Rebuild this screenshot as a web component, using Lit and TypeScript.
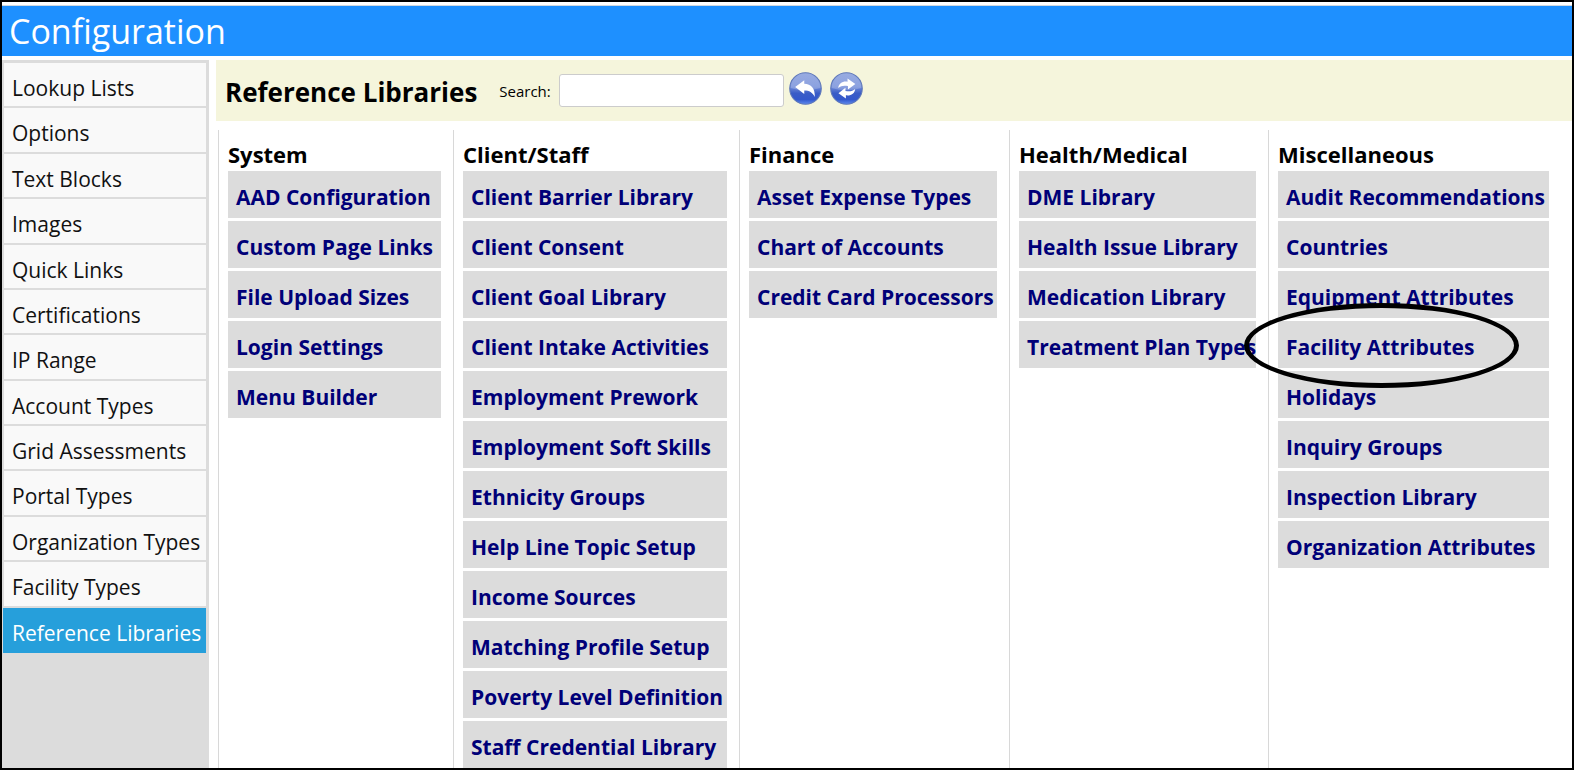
import { LitElement, html, css, svg, nothing } from "lit";
import { customElement, property } from "lit/decorators.js";
import { classMap } from "lit/directives/class-map.js";

interface Library {
  title: string;
  links: string[];
}

const SECTIONS = [
  "Lookup Lists",
  "Options",
  "Text Blocks",
  "Images",
  "Quick Links",
  "Certifications",
  "IP Range",
  "Account Types",
  "Grid Assessments",
  "Portal Types",
  "Organization Types",
  "Facility Types",
  "Reference Libraries",
];

const LIBRARIES: Library[] = [
  {
    title: "System",
    links: ["AAD Configuration", "Custom Page Links", "File Upload Sizes", "Login Settings", "Menu Builder"],
  },
  {
    title: "Client/Staff",
    links: [
      "Client Barrier Library",
      "Client Consent",
      "Client Goal Library",
      "Client Intake Activities",
      "Employment Prework",
      "Employment Soft Skills",
      "Ethnicity Groups",
      "Help Line Topic Setup",
      "Income Sources",
      "Matching Profile Setup",
      "Poverty Level Definition",
      "Staff Credential Library",
    ],
  },
  {
    title: "Finance",
    links: ["Asset Expense Types", "Chart of Accounts", "Credit Card Processors"],
  },
  {
    title: "Health/Medical",
    links: ["DME Library", "Health Issue Library", "Medication Library", "Treatment Plan Types"],
  },
  {
    title: "Miscellaneous",
    links: [
      "Audit Recommendations",
      "Countries",
      "Equipment Attributes",
      "Facility Attributes",
      "Holidays",
      "Inquiry Groups",
      "Inspection Library",
      "Organization Attributes",
    ],
  },
];

const GLYPHS = {
  back: svg`<path d="M6 14.6 L14.8 8 V11.4 C21.5 11.6 25.4 16 25 24.2 C22.6 19.8 20 18 14.8 18 V21.4 Z" fill="#fff"/>`,
  refresh: svg`
    <path d="M8 15.6 C8.4 11 12.4 8.6 17 9.4 V6.2 L24.6 11.6 L17.4 17 V13.6 C13.6 12.8 10.6 13.2 8 15.6 Z" fill="#fff"/>
    <path d="M24.4 16.4 C24 21 20 23.4 15.4 22.6 V25.8 L8.2 20.6 L15 15.2 V18.4 C18.8 19.2 21.8 18.8 24.4 16.4 Z" fill="#fff"/>`,
};

@customElement("round-button")
export class RoundButton extends LitElement {
  @property() glyph: keyof typeof GLYPHS = "back";
  @property() label = "";

  static styles = css`
    :host {
      display: block;
    }
    .button {
      display: block;
      padding: 0;
      border: 0;
      background: none;
      cursor: pointer;
    }
    .disc {
      display: block;
      width: 33px;
      height: 33px;
    }
  `;

  render() {
    return html`<button class="button" type="button" aria-label=${this.label}>
      <svg class="disc" viewBox="0 0 32 32" aria-hidden="true">
        <defs>
          <linearGradient id="body" x1="0" y1="0" x2="0" y2="1">
            <stop offset="0" stop-color="#7f97da" />
            <stop offset="0.45" stop-color="#6f8ad8" />
            <stop offset="0.65" stop-color="#3a5cc6" />
            <stop offset="0.85" stop-color="#3358cc" />
            <stop offset="1" stop-color="#5f8bf0" />
          </linearGradient>
          <linearGradient id="gloss" x1="0" y1="0" x2="0" y2="1">
            <stop offset="0" stop-color="#fff" stop-opacity="0.2" />
            <stop offset="1" stop-color="#fff" stop-opacity="0.2" />
          </linearGradient>
        </defs>
        <circle cx="16" cy="16" r="15.3" fill="url(#body)" stroke="#5f78b8" stroke-width="1" />
        <path d="M1.6 15.5 A14.4 14.4 0 0 1 30.4 15.5 Q16 20 1.6 15.5 Z" fill="url(#gloss)" />
        ${GLYPHS[this.glyph]}
      </svg>
    </button>`;
  }
}

@customElement("library-column")
export class LibraryColumn extends LitElement {
  @property({ attribute: false }) library!: Library;
  @property() circled = "";

  static styles = css`
    :host {
      display: block;
      border-left: 1px solid #d8d8d8;
      padding: 9px 12px 0 9px;
    }
    .title {
      margin: 0;
      padding-bottom: 1px;
      font-size: 22px;
      line-height: 31px;
      font-weight: 700;
      color: #000;
      white-space: nowrap;
    }
    .list {
      display: flex;
      flex-direction: column;
      gap: 3px;
      margin: 0;
      padding: 0;
      list-style: none;
    }
    .item {
      position: relative;
      background: #dcdcdc;
    }
    .link {
      display: block;
      padding: 12px 0 7px 8px;
      font-size: 21px;
      line-height: 28px;
      font-weight: 700;
      color: #000078;
      text-decoration: none;
      white-space: nowrap;
    }
    .ring {
      position: absolute;
      left: -34px;
      top: -18px;
      width: 275px;
      height: 85px;
      box-sizing: border-box;
      border: 5px solid #000;
      border-radius: 50%;
      pointer-events: none;
      z-index: 1;
    }
  `;

  render() {
    return html`
      <h3 class="title">${this.library.title}</h3>
      <ul class="list">
        ${this.library.links.map(
          (name) => html`<li class="item">
            <a class="link" href="#">${name}</a>
            ${name === this.circled ? html`<span class="ring"></span>` : nothing}
          </li>`,
        )}
      </ul>
    `;
  }
}

@customElement("app-root")
export class AppRoot extends LitElement {
  static styles = css`
    :host {
      display: flex;
      flex-direction: column;
      box-sizing: border-box;
      height: 100vh;
      overflow: hidden;
      border: 2px solid #000;
      padding-top: 3px;
      background: #fff;
      color: #000;
      font-family: "Open Sans", "Noto Sans", sans-serif;
    }
    .banner {
      flex: none;
      margin: 0;
      border-top: 1px solid #d0d8e0;
      padding: 1px 7px 0;
      background: #1e90ff;
      color: #fff;
      font-size: 34px;
      line-height: 49px;
      font-weight: 400;
    }
    .body {
      flex: 1;
      min-height: 0;
      display: flex;
      gap: 7px;
      padding-top: 4px;
    }
    .sidebar {
      flex: none;
      width: 207px;
      box-sizing: border-box;
      padding: 3px 3px 0 1px;
      background: #dcdcdc;
    }
    .sections {
      display: grid;
      grid-auto-rows: 1fr;
      height: 590px;
      margin: 0;
      padding: 0;
      list-style: none;
    }
    .section {
      display: block;
      box-sizing: border-box;
      height: 100%;
      border-left: 1px solid #dcdcdc;
      border-bottom: 2px solid #dcdcdc;
      padding: 10px 0 0 8px;
      background: #f9f9f9;
      color: #111;
      font-size: 21px;
      line-height: 30px;
      text-decoration: none;
      white-space: nowrap;
    }
    .current {
      border-color: #269fdb;
      background: #269fdb;
      color: #fff;
    }
    .main {
      flex: 1;
      min-width: 0;
      display: flex;
      flex-direction: column;
      gap: 9px;
    }
    .toolbar {
      flex: none;
      display: flex;
      align-items: center;
      box-sizing: border-box;
      height: 61px;
      padding: 0 9px;
      background: #f5f5dc;
    }
    .heading {
      margin: 0;
      padding-top: 2px;
      font-size: 26px;
      line-height: 36px;
      font-weight: 700;
      white-space: nowrap;
    }
    .search {
      display: flex;
      align-items: center;
      gap: 8px;
      margin-left: 22px;
      font-size: 15px;
    }
    .field {
      box-sizing: border-box;
      width: 225px;
      height: 33px;
      border: 1px solid #ccc;
      border-radius: 3px;
      padding: 0 8px;
      background: #fff;
      font: inherit;
    }
    .actions {
      display: flex;
      gap: 8px;
      margin-left: 5px;
      padding-bottom: 4px;
    }
    .columns {
      flex: 1;
      min-height: 0;
      display: grid;
      grid-template-columns: 235fr 286fr 270fr 259fr 293fr;
      padding: 0 11px 0 2px;
    }
    .column {
      min-width: 0;
    }
  `;

  render() {
    return html`
      <h1 class="banner">Configuration</h1>
      <div class="body">
        <nav class="sidebar" aria-label="Configuration">
          <ul class="sections">
            ${SECTIONS.map((name) => {
              const current = name === "Reference Libraries";
              return html`<li><a class=${classMap({ section: true, current })} href="#">${name}</a></li>`;
            })}
          </ul>
        </nav>
        <main class="main">
          <div class="toolbar">
            <h2 class="heading">Reference Libraries</h2>
            <div class="search">
              <label for="search">Search:</label>
              <input class="field" id="search" type="text" />
            </div>
            <div class="actions">
              <round-button glyph="back" label="Back"></round-button>
              <round-button glyph="refresh" label="Refresh"></round-button>
            </div>
          </div>
          <div class="columns">
            ${LIBRARIES.map(
              (library) =>
                html`<library-column
                  class="column"
                  .library=${library}
                  circled="Facility Attributes"
                ></library-column>`,
            )}
          </div>
        </main>
      </div>
    `;
  }
}
